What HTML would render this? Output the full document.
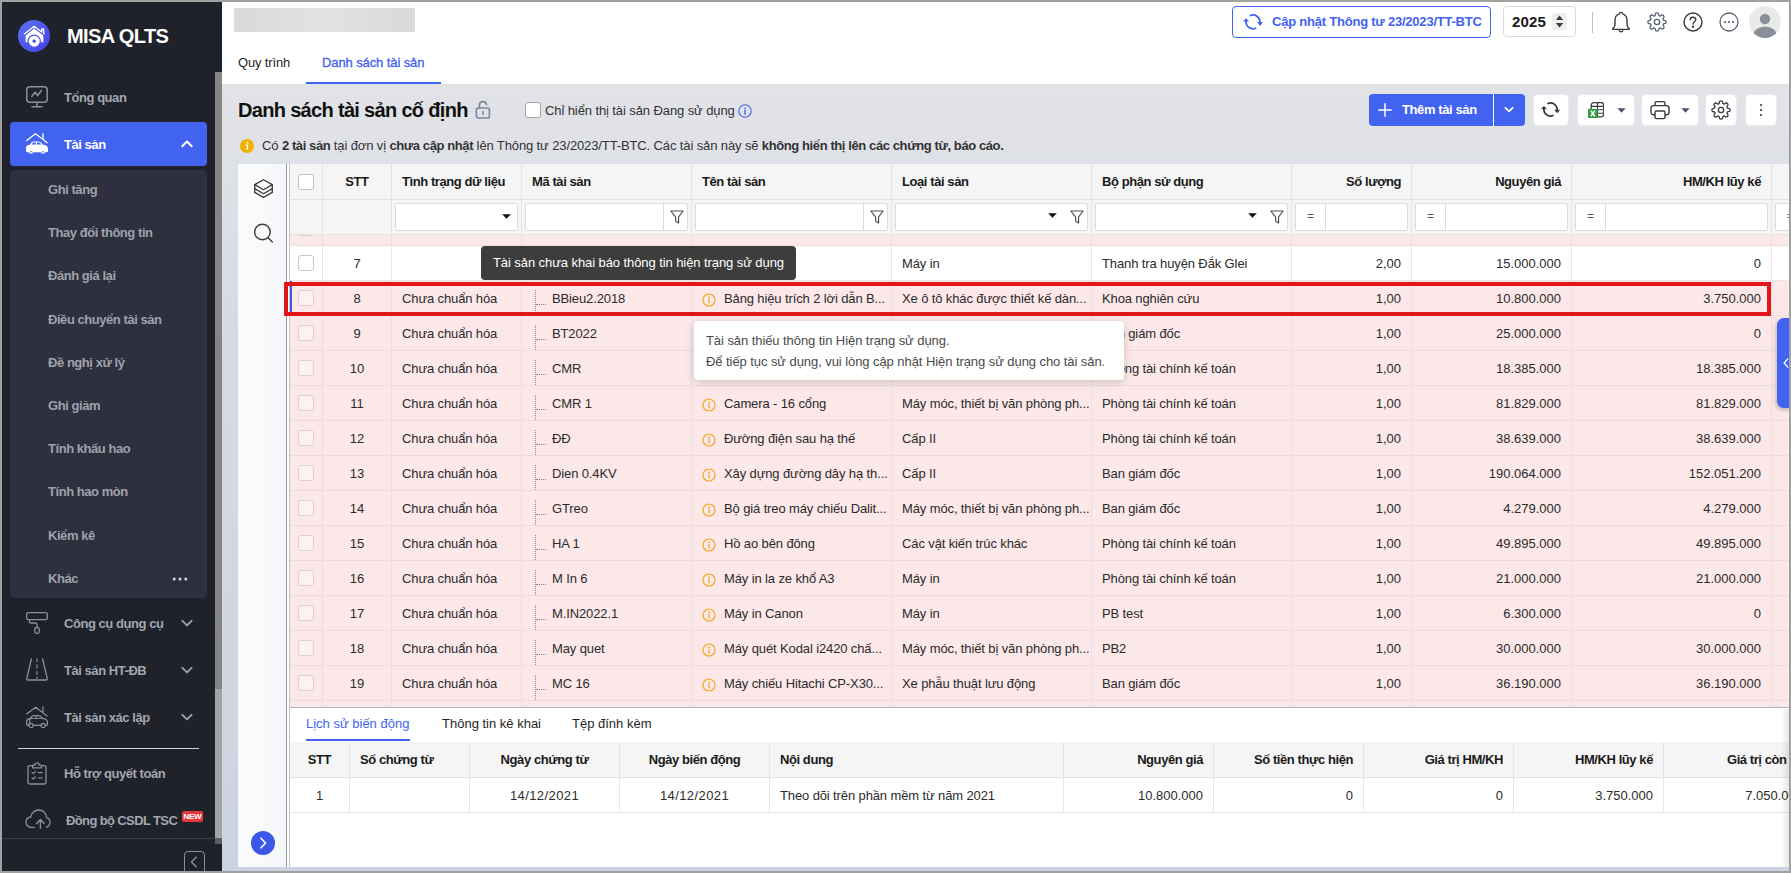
<!DOCTYPE html>
<html lang="vi"><head><meta charset="utf-8"><title>MISA QLTS</title>
<style>
*{box-sizing:border-box}
html,body{margin:0;padding:0}
body{width:1791px;height:873px;overflow:hidden;position:relative;background:#a1a1a1;font-family:"Liberation Sans",sans-serif;font-size:13px;color:#1f1f1f}
.abs{position:absolute}
#app{position:absolute;left:2px;top:2px;width:1787px;height:869px;overflow:hidden;background:linear-gradient(180deg,#e2e3e7 0%,#e2e3e7 9%,#dfe1e8 18.600%,#d6dae4 37%,#ccd3e0 100%)}
/* all children of #app positioned in page coords minus 2 => use wrapper shifted */
#pg{position:absolute;left:-2px;top:-2px;width:1791px;height:873px}
b,.b{font-weight:700}
/* sidebar */
#sb{position:absolute;left:2px;top:2px;width:220px;height:869px;background:#1f222b}
.mi{position:absolute;left:10px;width:197px;height:42px;border-radius:4px;color:#a3a6ae;font-weight:700;font-size:13px;letter-spacing:-.45px}
.mi .t{position:absolute;left:54px;top:0;line-height:42px;white-space:nowrap}
.mi svg.ic{position:absolute;left:14px;top:9px;width:24px;height:24px}
.mi svg.ch{position:absolute;left:169px;top:15px;width:14px;height:12px}
.mi.act{background:#4262f0;color:#fff}
#sub{position:absolute;left:10px;top:170px;width:197px;height:428px;background:#2e303f;border-radius:4px}
.si{position:absolute;left:38px;line-height:20px;color:#9fa2aa;font-weight:700;font-size:13px;letter-spacing:-.45px;white-space:nowrap}
/* top */
#top{position:absolute;left:222px;top:2px;width:1567px;height:82px;background:#fff}
.tab{position:absolute;top:53px;line-height:20px;font-size:13px;white-space:nowrap}
/* toolbar buttons */
.btn{position:absolute;top:95px;height:30px;background:#fff;border-radius:4px;box-shadow:0 0 0 1px rgba(255,255,255,.35)}
/* grid */
#panel{position:absolute;left:238px;top:164px;width:1551px;height:703px;background:#fff}
#grid{position:absolute;left:290px;top:164px;width:1499px;height:543px;overflow:hidden;background:#fff}
.hd{position:absolute;left:0;top:0;width:1499px;height:71px;background:#f5f5f5}
.hc{position:absolute;top:0;height:35px;line-height:35px;font-weight:700;font-size:13px;letter-spacing:-.42px;padding:0 10px;white-space:nowrap;border-right:1px solid #e4e4e4;color:#1a1a1a}
.fc{position:absolute;top:36px;height:35px;border-right:1px solid #e4e4e4}
.fi{position:absolute;left:3px;right:3px;top:3px;height:28px;background:#fff;border:1px solid #dcdcdc;border-radius:2px}
.row{position:absolute;left:0;width:1499px;background:#fff;border-bottom:1px solid #e6e6e6}
.row.pink{background:#fce8e8;border-bottom-color:#eadede}
.c{position:absolute;top:0;height:100%;line-height:36px;padding:0 0 0 10px;letter-spacing:-.12px;white-space:nowrap;overflow:hidden;border-right:1px solid #e6e6e6;color:#2b2b2b;font-size:13px}
.pink .c{border-right-color:#eadede}
.c.ctr{text-align:center;padding:0;letter-spacing:0}
.c.num{text-align:right;padding-right:10px;letter-spacing:0}
.cb{position:absolute;left:8px;top:9px;width:16px;height:16px;border:1px solid #c6c6c6;border-radius:3px;background:#fff}
.pink .cb{background:#fdf1f1;border-color:#dccfcf}
.tree{position:absolute;left:13px;top:9px;width:11px;height:25px;border-left:1px dotted #8a8a8a}
.tree:after{content:"";position:absolute;left:0;top:14px;width:10px;border-top:1px dotted #8a8a8a}
.ma{position:absolute;left:30px}
.wi{position:absolute;left:10px;top:12px;width:14px;height:14px}
.ten{position:absolute;left:32px}
.hd{z-index:2}
.fn{position:absolute;right:3px;top:6px;width:14px;height:14px}
.ar{position:absolute;top:10px;width:9px;height:5px}
.fdiv{position:absolute;right:23px;top:0;width:1px;height:100%;background:#dcdcdc}
.eq{position:absolute;left:0;top:0;width:30px;height:100%;border-right:1px solid #dcdcdc;text-align:center;line-height:25px;font-size:12px;color:#555}
.fi{right:3px}
.mi .t{left:52px;top:2px}
.mi svg.ch{left:167.5px;top:16.3px}
.k{letter-spacing:-.4px}
</style></head><body>
<div id="app"><div id="pg">

<!-- ============ SIDEBAR ============ -->
<div class="abs" style="left:2px;top:2px;width:220px;height:869px;background:#1f222b"></div>
<!-- logo -->
<svg class="abs" style="left:18px;top:20px;width:32px;height:32px" viewBox="0 0 32 32">
  <defs><linearGradient id="lg" x1="0" y1="0" x2="1" y2="1"><stop offset="0" stop-color="#5b72f2"/><stop offset="1" stop-color="#4540e6"/></linearGradient></defs>
  <circle cx="16" cy="16" r="16" fill="url(#lg)"/>
  <path d="M6 14.200 L16.200 6.300 L23.800 12 L23.800 9 L25.600 9 L25.600 13.200 L26.600 14" fill="none" stroke="#fff" stroke-width="1.3" stroke-linejoin="round"/>
  <path d="M16.200 8.600 L25.400 15.400 L25.400 22.200 L7.600 22.200 L7.600 15.400 Z" fill="#fff"/>
  <circle cx="16.200" cy="21.200" r="6.700" fill="#4c56ec"/>
  <circle cx="16.200" cy="21.200" r="5.500" fill="#fff"/>
  <path d="M16.200 19.100 L18.300 21.200 L16.200 23.300 L14.100 21.200 Z" fill="#4a52ea"/>
</svg>
<div class="abs" style="left:67px;top:22px;line-height:28px;font-size:20px;font-weight:700;color:#fff;letter-spacing:-.6px;white-space:nowrap">MISA QLTS</div>

<!-- Tổng quan -->
<div class="mi" style="left:12px;top:75px">
  <svg class="ic" style="left:14px;top:11px;width:22px;height:22px" viewBox="0 0 22 22" fill="none" stroke="#8e9096" stroke-width="1.500" stroke-linecap="round" stroke-linejoin="round"><rect x=".8" y=".8" width="20.400" height="15.400" rx="3"/><path d="M11 16.5V20.5M6 20.8H16"/><path d="M5.800 10.500L9 6.200L11.600 9.600L15.400 4.600" stroke-width="1.600"/></svg>
  <span class="t">Tổng quan</span>
</div>
<!-- Tài sản (active) -->
<div class="mi act" style="left:10px;top:122px;height:44px">
  <svg class="ic" style="left:16px;top:11px;width:22px;height:22px" viewBox="0 0 22 22"><path d="M.7 7.6L9.5 .8L17 6.6V.6M17 6.6L21 9.8" fill="none" stroke="#fff" stroke-width="1.3" stroke-linecap="round" stroke-linejoin="round"/><path d="M4.2 11.6C5 9.6 6 8.4 8 8.4H12.6C14.4 8.4 15.6 9.4 16.8 11.4C19.6 11.8 22 13 22 15.6V18C22 18.8 21.4 19.2 20.6 19.2H19.6A2.6 2.6 0 0 1 14.6 19.2H7.6A2.6 2.6 0 0 1 2.6 19.2H1.4C.6 19.2 0 18.8 0 18V15C0 13 1.8 12 4.2 11.6Z" fill="#fff"/><path d="M5.8 11.4C6.3 10.2 7 9.6 8.2 9.6H9.8V11.4ZM11 9.6H12.6C13.6 9.6 14.4 10.2 15.2 11.4H11Z" fill="#4262f0"/><circle cx="5.1" cy="19.4" r="1.5" fill="#4262f0"/><circle cx="17.1" cy="19.4" r="1.5" fill="#4262f0"/><circle cx="5.1" cy="19.4" r="1" fill="#fff"/><circle cx="17.1" cy="19.4" r="1" fill="#fff"/></svg>
  <span class="t" style="left:54px;top:1px;line-height:44px">Tài sản</span>
  <svg class="ch" style="left:169.500px;top:15.500px" viewBox="0 0 14 10" fill="none" stroke="#fff" stroke-width="2" stroke-linecap="round" stroke-linejoin="round"><path d="M2.300 7.200L7 2.500L11.700 7.200"/></svg>
</div>
<!-- submenu -->
<div id="sub"></div>
<span class="si" style="left:48px;top:180px">Ghi tăng</span>
<span class="si" style="left:48px;top:223px">Thay đổi thông tin</span>
<span class="si" style="left:48px;top:266px">Đánh giá lại</span>
<span class="si" style="left:48px;top:310px">Điều chuyển tài sản</span>
<span class="si" style="left:48px;top:353px">Đề nghị xử lý</span>
<span class="si" style="left:48px;top:396px">Ghi giảm</span>
<span class="si" style="left:48px;top:439px">Tính khấu hao</span>
<span class="si" style="left:48px;top:482px">Tính hao mòn</span>
<span class="si" style="left:48px;top:526px">Kiểm kê</span>
<span class="si" style="left:48px;top:569px">Khác</span>
<svg class="abs" style="left:172px;top:577px;width:16px;height:4px" viewBox="0 0 16 4" fill="#d8d9dd"><circle cx="2.2" cy="2" r="1.5"/><circle cx="8" cy="2" r="1.5"/><circle cx="13.8" cy="2" r="1.5"/></svg>

<!-- CCDC -->
<div class="mi" style="left:12px;top:601px">
  <svg class="ic" style="left:14px;top:11px;width:22px;height:22px" viewBox="0 0 22 22" fill="none" stroke="#8e9096" stroke-width="1.3" stroke-linecap="round" stroke-linejoin="round"><rect x=".7" y=".7" width="20.6" height="7" rx="1.6"/><path d="M3.4 7.8V9.6C3.4 10.6 4 11 5 11H9C10.4 11 11 11.6 11 13V15.4"/><rect x="8.8" y="15.4" width="4.4" height="6" rx="2.2"/></svg>
  <span class="t">Công cụ dụng cụ</span>
  <svg class="ch" viewBox="0 0 14 10" fill="none" stroke="#a0a2a9" stroke-width="1.9" stroke-linecap="round" stroke-linejoin="round"><path d="M2.400 2.800L7 7.400L11.600 2.800"/></svg>
</div>
<!-- HT-ĐB -->
<div class="mi" style="left:12px;top:648px">
  <svg class="ic" style="left:14px;top:10px;width:22px;height:23px" viewBox="0 0 22 23" fill="none" stroke="#8e9096" stroke-width="1.3" stroke-linecap="round" stroke-linejoin="round"><path d="M5.4 1L.8 20.4C.6 21.4 1 22 2 22H20C21 22 21.4 21.4 21.2 20.4L16.6 1"/><path d="M11 1V3.6M11 6.6V10M11 13.4V16.4M11 19V20.4" stroke-width="1.1"/></svg>
  <span class="t">Tài sản HT-ĐB</span>
  <svg class="ch" viewBox="0 0 14 10" fill="none" stroke="#a0a2a9" stroke-width="1.9" stroke-linecap="round" stroke-linejoin="round"><path d="M2.400 2.800L7 7.400L11.600 2.800"/></svg>
</div>
<!-- xác lập -->
<div class="mi" style="left:12px;top:695px">
  <svg class="ic" style="left:14px;top:11px;width:22px;height:22px" viewBox="0 0 22 22" fill="none" stroke="#8e9096" stroke-width="1.2" stroke-linecap="round" stroke-linejoin="round"><path d="M.7 8L9.6 1.2L17 6.8V.8M17 6.8L21.2 10.2"/><path d="M4.4 12.4C5.2 10.6 6.2 9.6 8 9.6H12.4C14.2 9.6 15.4 10.4 16.6 12.4C19.4 12.8 21.4 13.8 21.4 16V18.4C21.4 19 21 19.4 20.4 19.4H19.4M14.8 19.4H7.4M2.8 19.4H1.6C1 19.4.6 19 .6 18.4V15.6C.6 13.8 2.2 12.8 4.4 12.4Z"/><path d="M4.4 12.4H16.6M10.4 9.8V12.4" stroke-width="1"/><circle cx="5.1" cy="19.4" r="2.1"/><circle cx="17.1" cy="19.4" r="2.1"/></svg>
  <span class="t">Tài sản xác lập</span>
  <svg class="ch" viewBox="0 0 14 10" fill="none" stroke="#a0a2a9" stroke-width="1.9" stroke-linecap="round" stroke-linejoin="round"><path d="M2.400 2.800L7 7.400L11.600 2.800"/></svg>
</div>
<div class="abs" style="left:18px;top:748px;width:181px;height:1px;background:#cfd0d3"></div>
<!-- Hỗ trợ -->
<div class="mi" style="left:12px;top:751px">
  <svg class="ic" style="left:15px;top:11px;width:20px;height:23px" viewBox="0 0 20 23" fill="none" stroke="#8e9096" stroke-width="1.3" stroke-linecap="round" stroke-linejoin="round"><path d="M5.6 3.6H3C1.8 3.6 1 4.4 1 5.6V20C1 21.2 1.8 22 3 22H17C18.200 22 19 21.2 19 20V5.600C19 4.4 18.2 3.600 17 3.600H14.4"/><path d="M5.600 5.800V3.200H7.800C7.800 1.800 8.800 .8 10 .8C11.200 .8 12.200 1.800 12.200 3.200H14.400V5.800Z"/><path d="M5 10.400L6.300 11.700L8.400 9.400M11 10.600H15.400M5 15.800L6.300 17.100L8.400 14.800M11 16H15.400" stroke-width="1.2"/></svg>
  <span class="t">Hỗ trợ quyết toán</span>
</div>
<!-- Đồng bộ -->
<div class="mi" style="left:12px;top:798px">
  <svg class="ic" style="left:13px;top:11px;width:26px;height:20px" viewBox="0 0 26 20" fill="none" stroke="#8e9096" stroke-width="1.3" stroke-linecap="round" stroke-linejoin="round"><path d="M9.4 18.4H6.600C3.600 18.400 1 16.200 1 13.200C1 10.400 3 8.200 5.800 8C6.400 4 9.600 1 13.600 1C18.200 1 21.600 4.400 21.600 8.600C23.600 9.200 25 10.800 25 13C25 15.400 23.600 17.400 21.400 18.200"/><path d="M15.400 19.400V10.800M11.600 14.400L15.400 10.600L19.200 14.400" stroke-width="1.4"/></svg>
  <span class="t" style="left:54px;letter-spacing:-.62px">Đồng bộ CSDL TSC</span>
</div>
<div class="abs" style="left:182px;top:811px;width:21px;height:11px;background:#e5383d;border-radius:2px;color:#fff;font-size:8px;font-weight:700;line-height:11px;text-align:center;letter-spacing:-.3px">NEW</div>
<!-- footer -->
<div class="abs" style="left:2px;top:838px;width:213px;height:1px;background:#3d4049"></div>
<div class="abs" style="left:184px;top:851px;width:21px;height:24px;border:1px solid #8b8d92;border-radius:4px"></div>
<svg class="abs" style="left:190px;top:856px;width:8px;height:12px" viewBox="0 0 8 12" fill="none" stroke="#9a9ca3" stroke-width="1.1" stroke-linecap="round" stroke-linejoin="round"><path d="M6.4 1L1.4 6L6.4 11"/></svg>
<!-- scrollbar -->
<div class="abs" style="left:215px;top:72px;width:7px;height:617px;background:#858585"></div>
<div class="abs" style="left:215px;top:689px;width:7px;height:149px;background:#a4a4a4"></div>
<div class="abs" style="left:215px;top:838px;width:7px;height:6px;background:#5d5d5d"></div>


<!-- ============ TOP BAR ============ -->
<div id="top"></div>
<div class="abs" style="left:234px;top:8px;width:181px;height:24px;background:linear-gradient(90deg,#d9d9d9,#e2e2e2 50%,#d9d9d9);"></div>
<span class="tab" style="left:238px;color:#1f1f1f;letter-spacing:-.15px">Quy trình</span>
<span class="tab" style="left:322px;color:#4262f0;-webkit-text-stroke:.3px #4262f0;letter-spacing:-.1px">Danh sách tài sản</span>
<div class="abs" style="left:306px;top:82px;width:135px;height:2px;background:#4262f0"></div>
<!-- update button -->
<div class="abs" style="left:1232px;top:6px;width:259px;height:32px;border:1px solid #4262f0;border-radius:4px;background:#fff"></div>
<svg class="abs" style="left:1243px;top:14px;width:20px;height:16px" viewBox="0 0 20 16"><g fill="none" stroke="#4262f0" stroke-width="1.7" stroke-linecap="round"><path d="M7.4 1.5A7 7 0 0 1 17 8"/><path d="M12.600 14.3A7 7 0 0 1 3 7.600"/></g><path d="M14.100 8.100H20L17.050 11.900Z" fill="#4262f0"/><path d="M.1 7.500H6.100L3.050 4.200Z" fill="#4262f0"/></svg>
<span class="abs" style="left:1272px;top:12px;line-height:20px;font-size:13px;font-weight:700;color:#4262f0;letter-spacing:-.22px;white-space:nowrap">Cập nhật Thông tư 23/2023/TT-BTC</span>
<!-- year -->
<div class="abs" style="left:1503px;top:6px;width:73px;height:31px;border:1px solid #d9dbe0;border-radius:4px;background:#fff"></div>
<span class="abs" style="left:1512px;top:11px;line-height:22px;font-size:15px;font-weight:700;color:#1a1a1a;letter-spacing:.15px">2025</span>
<div class="abs" style="left:1552px;top:13px;width:15px;height:17px;background:#efefef;border-radius:1px"></div>
<svg class="abs" style="left:1555px;top:15px;width:9px;height:13px" viewBox="0 0 9 13" fill="#3a3a3a"><path d="M4.500 .6L8.200 5H.8Z"/><path d="M4.500 12.400L8.200 8H.8Z"/></svg>
<div class="abs" style="left:1592px;top:12px;width:1px;height:21px;background:#bcc1d2"></div>
<!-- bell -->
<svg class="abs" style="left:1611px;top:11px;width:20px;height:22px" viewBox="0 0 20 22" fill="none" stroke="#3a3a3a" stroke-width="1.4" stroke-linecap="round" stroke-linejoin="round"><path d="M10 1.400C8.800 1.400 8.400 2.200 8.400 2.800C5.600 3.600 4 6 4 9V13.400C4 15.400 3.200 16.400 1.800 17.600V18.400H18.200V17.600C16.800 16.400 16 15.400 16 13.400V9C16 6 14.400 3.600 11.600 2.800C11.600 2.200 11.200 1.400 10 1.400Z"/><path d="M8.200 19.600C8.400 20.400 9.100 20.800 10 20.800C10.900 20.800 11.600 20.400 11.800 19.600"/></svg>
<!-- gear -->
<svg class="abs" style="left:1647px;top:12px;width:20px;height:20px" viewBox="0 0 24 24" fill="none" stroke="#5b6275" stroke-width="1.600" stroke-linecap="round" stroke-linejoin="round"><circle cx="12" cy="12" r="3.200"/><path d="M19.400 15a1.650 1.650 0 0 0 .33 1.820l.06.06a2 2 0 1 1-2.830 2.830l-.06-.06a1.650 1.650 0 0 0-1.820-.33 1.650 1.650 0 0 0-1 1.510V21a2 2 0 0 1-4 0v-.09A1.650 1.650 0 0 0 9 19.400a1.650 1.650 0 0 0-1.820.33l-.06.06a2 2 0 1 1-2.830-2.830l.06-.06a1.650 1.650 0 0 0 .33-1.820 1.650 1.650 0 0 0-1.510-1H3a2 2 0 0 1 0-4h.09A1.650 1.650 0 0 0 4.600 9a1.650 1.650 0 0 0-.33-1.820l-.06-.06a2 2 0 1 1 2.830-2.830l.06.06a1.650 1.650 0 0 0 1.820.33H9a1.650 1.650 0 0 0 1-1.510V3a2 2 0 0 1 4 0v.09a1.650 1.650 0 0 0 1 1.510 1.650 1.650 0 0 0 1.820-.33l.06-.06a2 2 0 1 1 2.830 2.830l-.06.06a1.650 1.650 0 0 0-.33 1.820V9a1.650 1.650 0 0 0 1.510 1H21a2 2 0 0 1 0 4h-.09a1.650 1.650 0 0 0-1.510 1z"/></svg>
<!-- help -->
<svg class="abs" style="left:1683px;top:12px;width:20px;height:20px" viewBox="0 0 20 20" fill="none" stroke="#3a3a3a" stroke-width="1.400" stroke-linecap="round" stroke-linejoin="round"><circle cx="10" cy="10" r="9"/><path d="M7.200 7.800C7.200 6.200 8.400 5.200 10 5.200C11.600 5.200 12.800 6.200 12.800 7.600C12.800 9.600 10 9.800 10 12"/><circle cx="10" cy="14.800" r=".5" fill="#3a3a3a"/></svg>
<!-- more -->
<svg class="abs" style="left:1719px;top:12px;width:20px;height:20px" viewBox="0 0 20 20" fill="none" stroke="#5b6275" stroke-width="1.300"><circle cx="10" cy="10" r="9"/><g fill="#5b6275" stroke="none"><circle cx="6" cy="10" r="1.100"/><circle cx="10" cy="10" r="1.100"/><circle cx="14" cy="10" r="1.100"/></g></svg>
<!-- avatar -->
<svg class="abs" style="left:1749px;top:6px;width:32px;height:32px" viewBox="0 0 32 32"><defs><clipPath id="av"><circle cx="16" cy="16" r="16"/></clipPath></defs><circle cx="16" cy="16" r="16" fill="#e9e9e9"/><g clip-path="url(#av)" fill="#8b8e9b"><circle cx="16" cy="13" r="5.200"/><ellipse cx="16" cy="29" rx="11.500" ry="8.600"/></g></svg>


<!-- ============ TITLE / TOOLBAR ============ -->
<span class="abs" style="left:238px;top:96px;line-height:28px;font-size:20px;font-weight:700;color:#111;letter-spacing:-.68px;white-space:nowrap">Danh sách tài sản cố định</span>
<svg class="abs" style="left:475px;top:100px;width:16px;height:19px" viewBox="0 0 16 19" fill="none" stroke="#8388a0" stroke-width="1.700" stroke-linecap="round" stroke-linejoin="round"><rect x="1.400" y="8" width="13" height="10" rx="1.800"/><path d="M4.400 8V5.200C4.400 3 5.800 1.600 8 1.600C9.800 1.600 11.200 2.600 11.500 4.300"/><path d="M8 11.800V14.200"/></svg>
<div class="abs" style="left:525px;top:102px;width:16px;height:16px;border:1px solid #a6a6a6;border-radius:3px;background:#fff"></div>
<span class="abs" style="left:545px;top:101px;line-height:20px;font-size:13px;color:#333;letter-spacing:-.1px;white-space:nowrap">Chỉ hiển thị tài sản Đang sử dụng</span>
<svg class="abs" style="left:738px;top:104px;width:14px;height:14px" viewBox="0 0 14 14" fill="none" stroke="#4262f0" stroke-width="1.100"><circle cx="7" cy="7" r="6.200"/><circle cx="7" cy="4.200" r=".8" fill="#4262f0" stroke="none"/><path d="M7 6.200V10.400" stroke-width="1.300" stroke-linecap="round"/></svg>
<!-- add button -->
<div class="abs" style="left:1369px;top:94px;width:156px;height:32px;background:#4262f0;border-radius:4px"></div>
<div class="abs" style="left:1493px;top:94px;width:1px;height:32px;background:#fff"></div>
<svg class="abs" style="left:1378px;top:103px;width:14px;height:14px" viewBox="0 0 14 14" stroke="#fff" stroke-width="1.500" stroke-linecap="round"><path d="M7 .8V13.200M.8 7H13.200"/></svg>
<span class="abs" style="left:1402px;top:100px;line-height:20px;font-size:13px;font-weight:700;color:#fff;letter-spacing:-.4px;white-space:nowrap">Thêm tài sản</span>
<svg class="abs" style="left:1504px;top:106px;width:10px;height:8px" viewBox="0 0 10 8" fill="none" stroke="#fff" stroke-width="1.800" stroke-linecap="round" stroke-linejoin="round"><path d="M1.400 1.800L5 5.400L8.600 1.800"/></svg>
<!-- refresh -->
<div class="btn" style="left:1534px;width:34px"></div>
<svg class="abs" style="left:1541.400px;top:102.400px;width:19px;height:15.200px" viewBox="0 0 20 16"><g fill="none" stroke="#333" stroke-width="1.800" stroke-linecap="round"><path d="M7.400 1.500A7 7 0 0 1 17 8"/><path d="M12.600 14.300A7 7 0 0 1 3 7.600"/></g><path d="M14.100 8.100H20L17.050 11.900Z" fill="#333"/><path d="M.1 7.500H6.100L3.050 4.200Z" fill="#333"/></svg>
<!-- excel -->
<div class="btn" style="left:1578px;width:56px"></div>
<svg class="abs" style="left:1587.800px;top:102.300px;width:16.400px;height:16.200px" viewBox="0 0 16.400 16.200"><rect x="3.200" y=".65" width="12.500" height="14.200" rx="2.600" fill="#fff" stroke="#3a3a3a" stroke-width="1.300"/><path d="M3.200 4.400H15.700M3.200 7.800H15.700M3.200 11.200H15.700M9.500 .65V14.850" stroke="#3a3a3a" stroke-width="1.100"/><rect x="0" y="6.900" width="9.700" height="9.200" fill="#2ea043"/><path d="M2.800 8.800L6.900 14.200M6.900 8.800L2.800 14.200" stroke="#fff" stroke-width="1.500"/></svg>
<svg class="abs" style="left:1617px;top:108px;width:9px;height:5px" viewBox="0 0 9 5" fill="#4b5273"><path d="M.4 .2H8.600L4.500 4.800Z"/></svg>
<!-- print -->
<div class="btn" style="left:1642px;width:56px"></div>
<svg class="abs" style="left:1650px;top:100px;width:20px;height:20px" viewBox="0 0 20 20" fill="none" stroke="#3a3a3a" stroke-width="1.400" stroke-linejoin="round"><path d="M5 5.600V3.200C5 2.200 5.600 1.600 6.600 1.600H13.400C14.400 1.600 15 2.200 15 3.200V5.600"/><path d="M5 14.800H3.600C2 14.800 1 13.800 1 12.200V8.200C1 6.600 2 5.600 3.600 5.600H16.400C18 5.600 19 6.600 19 8.200V12.200C19 13.800 18 14.800 16.400 14.800H15"/><rect x="5" y="11" width="10" height="7.600" rx="1.400"/></svg>
<svg class="abs" style="left:1681px;top:108px;width:9px;height:5px" viewBox="0 0 9 5" fill="#4b5273"><path d="M.4 .2H8.600L4.500 4.800Z"/></svg>
<!-- settings -->
<div class="btn" style="left:1706px;width:30px"></div>
<svg class="abs" style="left:1711px;top:100px;width:20px;height:20px" viewBox="0 0 24 24" fill="none" stroke="#3a3a3a" stroke-width="1.600" stroke-linecap="round" stroke-linejoin="round"><circle cx="12" cy="12" r="3.200"/><path d="M19.400 15a1.650 1.650 0 0 0 .33 1.820l.06.06a2 2 0 1 1-2.830 2.830l-.06-.06a1.650 1.650 0 0 0-1.820-.33 1.650 1.650 0 0 0-1 1.510V21a2 2 0 0 1-4 0v-.09A1.650 1.650 0 0 0 9 19.400a1.650 1.650 0 0 0-1.820.33l-.06.06a2 2 0 1 1-2.830-2.830l.06-.06a1.650 1.650 0 0 0 .33-1.820 1.650 1.650 0 0 0-1.510-1H3a2 2 0 0 1 0-4h.09A1.650 1.650 0 0 0 4.600 9a1.650 1.650 0 0 0-.33-1.820l-.06-.06a2 2 0 1 1 2.830-2.830l.06.06a1.650 1.650 0 0 0 1.820.33H9a1.650 1.650 0 0 0 1-1.510V3a2 2 0 0 1 4 0v.09a1.650 1.650 0 0 0 1 1.510 1.650 1.650 0 0 0 1.820-.33l.06-.06a2 2 0 1 1 2.830 2.830l-.06.06a1.650 1.650 0 0 0-.33 1.820V9a1.650 1.650 0 0 0 1.510 1H21a2 2 0 0 1 0 4h-.09a1.650 1.650 0 0 0-1.510 1z"/></svg>
<!-- more vertical -->
<div class="btn" style="left:1746px;width:30px"></div>
<svg class="abs" style="left:1759px;top:103px;width:4px;height:14px" viewBox="0 0 4 14" fill="#3a3a3a"><circle cx="2" cy="2" r="1.100"/><circle cx="2" cy="7" r="1.100"/><circle cx="2" cy="12" r="1.100"/></svg>
<!-- notice -->
<svg class="abs" style="left:240px;top:139px;width:14px;height:14px" viewBox="0 0 14 14"><circle cx="7" cy="7" r="7" fill="#f2b100"/><circle cx="7.400" cy="3.800" r="1" fill="#fff"/><path d="M5.600 6.200H7.800L7 10.200H8.200" fill="none" stroke="#fff" stroke-width="1.300" stroke-linejoin="round"/></svg>
<span class="abs" style="left:262px;top:136px;line-height:20px;font-size:13px;color:#333;letter-spacing:-.12px;white-space:nowrap">Có <b class="k">2 tài sản</b> tại đơn vị <b class="k">chưa cập nhật</b> lên Thông tư 23/2023/TT-BTC. Các tài sản này sẽ <b class="k">không hiển thị lên các chứng từ, báo cáo.</b></span>


<!-- ============ GRID ============ -->
<div id="panel"></div>
<div class="abs" style="left:238px;top:164px;width:48px;height:703px;background:linear-gradient(90deg,#fafbfc,#f5f7fa)"></div>
<div class="abs" style="left:286px;top:164px;width:1px;height:703px;background:#9a9a9a"></div>
<div class="abs" style="left:289px;top:164px;width:1px;height:703px;background:#c4c4c4"></div>
<svg class="abs" style="left:253.600px;top:179.400px;width:19px;height:19.200px" viewBox="0 0 19 19.200" fill="none" stroke="#3a3a3a" stroke-width="1.300" stroke-linejoin="round" stroke-linecap="round"><path d="M9.500 .8L18.300 5.600L9.500 10.700L.7 5.600Z"/><path d="M.7 9.600L9.500 14.700L18.300 9.600"/><path d="M.7 13.400L9.500 18.400L18.300 13.400"/><path d="M.7 5.600V13.400M18.300 5.600V13.400"/></svg>
<svg class="abs" style="left:253px;top:223px;width:21px;height:21px" viewBox="0 0 21 21" fill="none" stroke="#3a3a3a" stroke-width="1.400" stroke-linecap="round"><circle cx="9.400" cy="9" r="7.800"/><path d="M15.100 14.700L19.300 18.900"/></svg>
<svg class="abs" style="left:251px;top:831px;width:24px;height:24px" viewBox="0 0 24 24"><circle cx="12" cy="12" r="12" fill="#3b58e8"/><path d="M10 7.200L14.600 12L10 16.800" fill="none" stroke="#fff" stroke-width="1.600" stroke-linecap="round" stroke-linejoin="round"/></svg>

<div id="grid">
  <div class="hd">
  <div class="hc" style="left:0px;width:33px;text-align:left"><i class="cb" style="top:10px;background:#fff;border-color:#c2c2c2"></i></div>
<div class="fc" style="left:0px;width:33px"></div>
<div class="hc" style="left:33px;width:69px;text-align:center">STT</div>
<div class="fc" style="left:33px;width:69px"></div>
<div class="hc" style="left:102px;width:130px;text-align:left">Tình trạng dữ liệu</div>
<div class="fc" style="left:102px;width:130px"><div class="fi"><svg class="ar" style="right:6px;top:10px" viewBox="0 0 9 5" fill="#111"><path d="M.2 .2H8.800L4.500 4.800Z"/></svg></div></div>
<div class="hc" style="left:232px;width:170px;text-align:left">Mã tài sản</div>
<div class="fc" style="left:232px;width:170px"><div class="fi"><div class="fdiv"></div><svg class="fn" viewBox="0 0 14 14" fill="none" stroke="#4a4a4a" stroke-width="1.1" stroke-linejoin="round"><path d="M.8 1H13.200L8.600 6.800V13L5.600 11V6.800Z"/></svg></div></div>
<div class="hc" style="left:402px;width:200px;text-align:left">Tên tài sản</div>
<div class="fc" style="left:402px;width:200px"><div class="fi"><div class="fdiv"></div><svg class="fn" viewBox="0 0 14 14" fill="none" stroke="#4a4a4a" stroke-width="1.1" stroke-linejoin="round"><path d="M.8 1H13.200L8.600 6.800V13L5.600 11V6.800Z"/></svg></div></div>
<div class="hc" style="left:602px;width:200px;text-align:left">Loại tài sản</div>
<div class="fc" style="left:602px;width:200px"><div class="fi"><svg class="ar" style="right:30px;top:9px" viewBox="0 0 9 5" fill="#111"><path d="M.2 .2H8.800L4.500 4.800Z"/></svg><svg class="fn" viewBox="0 0 14 14" fill="none" stroke="#4a4a4a" stroke-width="1.1" stroke-linejoin="round"><path d="M.8 1H13.200L8.600 6.800V13L5.600 11V6.800Z"/></svg></div></div>
<div class="hc" style="left:802px;width:200px;text-align:left">Bộ phận sử dụng</div>
<div class="fc" style="left:802px;width:200px"><div class="fi"><svg class="ar" style="right:30px;top:9px" viewBox="0 0 9 5" fill="#111"><path d="M.2 .2H8.800L4.500 4.800Z"/></svg><svg class="fn" viewBox="0 0 14 14" fill="none" stroke="#4a4a4a" stroke-width="1.1" stroke-linejoin="round"><path d="M.8 1H13.200L8.600 6.800V13L5.600 11V6.800Z"/></svg></div></div>
<div class="hc" style="left:1002px;width:120px;text-align:right">Số lượng</div>
<div class="fc" style="left:1002px;width:120px"><div class="fi"><div class="eq">=</div></div></div>
<div class="hc" style="left:1122px;width:160px;text-align:right">Nguyên giá</div>
<div class="fc" style="left:1122px;width:160px"><div class="fi"><div class="eq">=</div></div></div>
<div class="hc" style="left:1282px;width:200px;text-align:right">HM/KH lũy kế</div>
<div class="fc" style="left:1282px;width:200px"><div class="fi"><div class="eq">=</div></div></div>
<div class="hc" style="left:1482px;width:200px;text-align:left"></div>
<div class="fc" style="left:1482px;width:200px"><div class="fi"><div class="eq">=</div></div></div>
<div class="abs" style="left:0;top:35px;width:1499px;height:1px;background:#e2e2e2"></div><div class="abs" style="left:0;top:70px;width:1499px;height:1px;background:#e2e2e2"></div>
  </div>
  <div class="row pink" style="top:47px;height:35px"><div class="c " style="left:0px;width:33px"><i class="cb"></i></div><div class="c ctr" style="left:33px;width:69px"></div><div class="c " style="left:102px;width:130px"></div><div class="c " style="left:232px;width:170px"></div><div class="c " style="left:402px;width:200px"></div><div class="c " style="left:602px;width:200px"></div><div class="c " style="left:802px;width:200px"></div><div class="c num" style="left:1002px;width:120px"></div><div class="c num" style="left:1122px;width:160px"></div><div class="c num" style="left:1282px;width:200px"></div><div class="c " style="left:1482px;width:200px"></div></div>
<div class="row" style="top:82px;height:35px"><div class="c " style="left:0px;width:33px"><i class="cb"></i></div><div class="c ctr" style="left:33px;width:69px">7</div><div class="c " style="left:102px;width:130px"></div><div class="c " style="left:232px;width:170px"></div><div class="c " style="left:402px;width:200px"></div><div class="c " style="left:602px;width:200px">Máy in</div><div class="c " style="left:802px;width:200px">Thanh tra huyện Đắk Glei</div><div class="c num" style="left:1002px;width:120px">2,00</div><div class="c num" style="left:1122px;width:160px">15.000.000</div><div class="c num" style="left:1282px;width:200px">0</div><div class="c " style="left:1482px;width:200px"></div></div>
<div class="row pink" style="top:117px;height:35px"><div class="c " style="left:0px;width:33px"><i class="cb"></i></div><div class="c ctr" style="left:33px;width:69px">8</div><div class="c " style="left:102px;width:130px">Chưa chuẩn hóa</div><div class="c " style="left:232px;width:170px"><i class="tree"></i><span class="ma">BBieu2.2018</span></div><div class="c " style="left:402px;width:200px"><svg class="wi" viewBox="0 0 14 14"><circle cx="7" cy="7" r="6" fill="none" stroke="#f5a623" stroke-width="1.2"/><circle cx="7" cy="4.4" r="0.9" fill="#f5a623"/><rect x="6.35" y="6" width="1.3" height="4.4" rx=".6" fill="#f5a623"/></svg><span class="ten">Bảng hiệu trích 2 lời dẫn B...</span></div><div class="c " style="left:602px;width:200px">Xe ô tô khác được thiết kế dàn...</div><div class="c " style="left:802px;width:200px">Khoa nghiên cứu</div><div class="c num" style="left:1002px;width:120px">1,00</div><div class="c num" style="left:1122px;width:160px">10.800.000</div><div class="c num" style="left:1282px;width:200px">3.750.000</div><div class="c " style="left:1482px;width:200px"></div></div>
<div class="row pink" style="top:152px;height:35px"><div class="c " style="left:0px;width:33px"><i class="cb"></i></div><div class="c ctr" style="left:33px;width:69px">9</div><div class="c " style="left:102px;width:130px">Chưa chuẩn hóa</div><div class="c " style="left:232px;width:170px"><i class="tree"></i><span class="ma">BT2022</span></div><div class="c " style="left:402px;width:200px"></div><div class="c " style="left:602px;width:200px"></div><div class="c " style="left:802px;width:200px">Ban giám đốc</div><div class="c num" style="left:1002px;width:120px">1,00</div><div class="c num" style="left:1122px;width:160px">25.000.000</div><div class="c num" style="left:1282px;width:200px">0</div><div class="c " style="left:1482px;width:200px"></div></div>
<div class="row pink" style="top:187px;height:35px"><div class="c " style="left:0px;width:33px"><i class="cb"></i></div><div class="c ctr" style="left:33px;width:69px">10</div><div class="c " style="left:102px;width:130px">Chưa chuẩn hóa</div><div class="c " style="left:232px;width:170px"><i class="tree"></i><span class="ma">CMR</span></div><div class="c " style="left:402px;width:200px"></div><div class="c " style="left:602px;width:200px"></div><div class="c " style="left:802px;width:200px">Phòng tài chính kế toán</div><div class="c num" style="left:1002px;width:120px">1,00</div><div class="c num" style="left:1122px;width:160px">18.385.000</div><div class="c num" style="left:1282px;width:200px">18.385.000</div><div class="c " style="left:1482px;width:200px"></div></div>
<div class="row pink" style="top:222px;height:35px"><div class="c " style="left:0px;width:33px"><i class="cb"></i></div><div class="c ctr" style="left:33px;width:69px">11</div><div class="c " style="left:102px;width:130px">Chưa chuẩn hóa</div><div class="c " style="left:232px;width:170px"><i class="tree"></i><span class="ma">CMR 1</span></div><div class="c " style="left:402px;width:200px"><svg class="wi" viewBox="0 0 14 14"><circle cx="7" cy="7" r="6" fill="none" stroke="#f5a623" stroke-width="1.2"/><circle cx="7" cy="4.4" r="0.9" fill="#f5a623"/><rect x="6.35" y="6" width="1.3" height="4.4" rx=".6" fill="#f5a623"/></svg><span class="ten">Camera - 16 cổng</span></div><div class="c " style="left:602px;width:200px">Máy móc, thiết bị văn phòng ph...</div><div class="c " style="left:802px;width:200px">Phòng tài chính kế toán</div><div class="c num" style="left:1002px;width:120px">1,00</div><div class="c num" style="left:1122px;width:160px">81.829.000</div><div class="c num" style="left:1282px;width:200px">81.829.000</div><div class="c " style="left:1482px;width:200px"></div></div>
<div class="row pink" style="top:257px;height:35px"><div class="c " style="left:0px;width:33px"><i class="cb"></i></div><div class="c ctr" style="left:33px;width:69px">12</div><div class="c " style="left:102px;width:130px">Chưa chuẩn hóa</div><div class="c " style="left:232px;width:170px"><i class="tree"></i><span class="ma">ĐĐ</span></div><div class="c " style="left:402px;width:200px"><svg class="wi" viewBox="0 0 14 14"><circle cx="7" cy="7" r="6" fill="none" stroke="#f5a623" stroke-width="1.2"/><circle cx="7" cy="4.4" r="0.9" fill="#f5a623"/><rect x="6.35" y="6" width="1.3" height="4.4" rx=".6" fill="#f5a623"/></svg><span class="ten">Đường điện sau hạ thế</span></div><div class="c " style="left:602px;width:200px">Cấp II</div><div class="c " style="left:802px;width:200px">Phòng tài chính kế toán</div><div class="c num" style="left:1002px;width:120px">1,00</div><div class="c num" style="left:1122px;width:160px">38.639.000</div><div class="c num" style="left:1282px;width:200px">38.639.000</div><div class="c " style="left:1482px;width:200px"></div></div>
<div class="row pink" style="top:292px;height:35px"><div class="c " style="left:0px;width:33px"><i class="cb"></i></div><div class="c ctr" style="left:33px;width:69px">13</div><div class="c " style="left:102px;width:130px">Chưa chuẩn hóa</div><div class="c " style="left:232px;width:170px"><i class="tree"></i><span class="ma">Dien 0.4KV</span></div><div class="c " style="left:402px;width:200px"><svg class="wi" viewBox="0 0 14 14"><circle cx="7" cy="7" r="6" fill="none" stroke="#f5a623" stroke-width="1.2"/><circle cx="7" cy="4.4" r="0.9" fill="#f5a623"/><rect x="6.35" y="6" width="1.3" height="4.4" rx=".6" fill="#f5a623"/></svg><span class="ten">Xây dựng đường dây hạ th...</span></div><div class="c " style="left:602px;width:200px">Cấp II</div><div class="c " style="left:802px;width:200px">Ban giám đốc</div><div class="c num" style="left:1002px;width:120px">1,00</div><div class="c num" style="left:1122px;width:160px">190.064.000</div><div class="c num" style="left:1282px;width:200px">152.051.200</div><div class="c " style="left:1482px;width:200px"></div></div>
<div class="row pink" style="top:327px;height:35px"><div class="c " style="left:0px;width:33px"><i class="cb"></i></div><div class="c ctr" style="left:33px;width:69px">14</div><div class="c " style="left:102px;width:130px">Chưa chuẩn hóa</div><div class="c " style="left:232px;width:170px"><i class="tree"></i><span class="ma">GTreo</span></div><div class="c " style="left:402px;width:200px"><svg class="wi" viewBox="0 0 14 14"><circle cx="7" cy="7" r="6" fill="none" stroke="#f5a623" stroke-width="1.2"/><circle cx="7" cy="4.4" r="0.9" fill="#f5a623"/><rect x="6.35" y="6" width="1.3" height="4.4" rx=".6" fill="#f5a623"/></svg><span class="ten">Bộ giá treo máy chiếu Dalit...</span></div><div class="c " style="left:602px;width:200px">Máy móc, thiết bị văn phòng ph...</div><div class="c " style="left:802px;width:200px">Ban giám đốc</div><div class="c num" style="left:1002px;width:120px">1,00</div><div class="c num" style="left:1122px;width:160px">4.279.000</div><div class="c num" style="left:1282px;width:200px">4.279.000</div><div class="c " style="left:1482px;width:200px"></div></div>
<div class="row pink" style="top:362px;height:35px"><div class="c " style="left:0px;width:33px"><i class="cb"></i></div><div class="c ctr" style="left:33px;width:69px">15</div><div class="c " style="left:102px;width:130px">Chưa chuẩn hóa</div><div class="c " style="left:232px;width:170px"><i class="tree"></i><span class="ma">HA 1</span></div><div class="c " style="left:402px;width:200px"><svg class="wi" viewBox="0 0 14 14"><circle cx="7" cy="7" r="6" fill="none" stroke="#f5a623" stroke-width="1.2"/><circle cx="7" cy="4.4" r="0.9" fill="#f5a623"/><rect x="6.35" y="6" width="1.3" height="4.4" rx=".6" fill="#f5a623"/></svg><span class="ten">Hồ ao bên đông</span></div><div class="c " style="left:602px;width:200px">Các vật kiến trúc khác</div><div class="c " style="left:802px;width:200px">Phòng tài chính kế toán</div><div class="c num" style="left:1002px;width:120px">1,00</div><div class="c num" style="left:1122px;width:160px">49.895.000</div><div class="c num" style="left:1282px;width:200px">49.895.000</div><div class="c " style="left:1482px;width:200px"></div></div>
<div class="row pink" style="top:397px;height:35px"><div class="c " style="left:0px;width:33px"><i class="cb"></i></div><div class="c ctr" style="left:33px;width:69px">16</div><div class="c " style="left:102px;width:130px">Chưa chuẩn hóa</div><div class="c " style="left:232px;width:170px"><i class="tree"></i><span class="ma">M In 6</span></div><div class="c " style="left:402px;width:200px"><svg class="wi" viewBox="0 0 14 14"><circle cx="7" cy="7" r="6" fill="none" stroke="#f5a623" stroke-width="1.2"/><circle cx="7" cy="4.4" r="0.9" fill="#f5a623"/><rect x="6.35" y="6" width="1.3" height="4.4" rx=".6" fill="#f5a623"/></svg><span class="ten">Máy in la ze khổ A3</span></div><div class="c " style="left:602px;width:200px">Máy in</div><div class="c " style="left:802px;width:200px">Phòng tài chính kế toán</div><div class="c num" style="left:1002px;width:120px">1,00</div><div class="c num" style="left:1122px;width:160px">21.000.000</div><div class="c num" style="left:1282px;width:200px">21.000.000</div><div class="c " style="left:1482px;width:200px"></div></div>
<div class="row pink" style="top:432px;height:35px"><div class="c " style="left:0px;width:33px"><i class="cb"></i></div><div class="c ctr" style="left:33px;width:69px">17</div><div class="c " style="left:102px;width:130px">Chưa chuẩn hóa</div><div class="c " style="left:232px;width:170px"><i class="tree"></i><span class="ma">M.IN2022.1</span></div><div class="c " style="left:402px;width:200px"><svg class="wi" viewBox="0 0 14 14"><circle cx="7" cy="7" r="6" fill="none" stroke="#f5a623" stroke-width="1.2"/><circle cx="7" cy="4.4" r="0.9" fill="#f5a623"/><rect x="6.35" y="6" width="1.3" height="4.4" rx=".6" fill="#f5a623"/></svg><span class="ten">Máy in Canon</span></div><div class="c " style="left:602px;width:200px">Máy in</div><div class="c " style="left:802px;width:200px">PB test</div><div class="c num" style="left:1002px;width:120px">1,00</div><div class="c num" style="left:1122px;width:160px">6.300.000</div><div class="c num" style="left:1282px;width:200px">0</div><div class="c " style="left:1482px;width:200px"></div></div>
<div class="row pink" style="top:467px;height:35px"><div class="c " style="left:0px;width:33px"><i class="cb"></i></div><div class="c ctr" style="left:33px;width:69px">18</div><div class="c " style="left:102px;width:130px">Chưa chuẩn hóa</div><div class="c " style="left:232px;width:170px"><i class="tree"></i><span class="ma">May quet</span></div><div class="c " style="left:402px;width:200px"><svg class="wi" viewBox="0 0 14 14"><circle cx="7" cy="7" r="6" fill="none" stroke="#f5a623" stroke-width="1.2"/><circle cx="7" cy="4.4" r="0.9" fill="#f5a623"/><rect x="6.35" y="6" width="1.3" height="4.4" rx=".6" fill="#f5a623"/></svg><span class="ten">Máy quét Kodal i2420 chấ...</span></div><div class="c " style="left:602px;width:200px">Máy móc, thiết bị văn phòng ph...</div><div class="c " style="left:802px;width:200px">PB2</div><div class="c num" style="left:1002px;width:120px">1,00</div><div class="c num" style="left:1122px;width:160px">30.000.000</div><div class="c num" style="left:1282px;width:200px">30.000.000</div><div class="c " style="left:1482px;width:200px"></div></div>
<div class="row pink" style="top:502px;height:35px"><div class="c " style="left:0px;width:33px"><i class="cb"></i></div><div class="c ctr" style="left:33px;width:69px">19</div><div class="c " style="left:102px;width:130px">Chưa chuẩn hóa</div><div class="c " style="left:232px;width:170px"><i class="tree"></i><span class="ma">MC 16</span></div><div class="c " style="left:402px;width:200px"><svg class="wi" viewBox="0 0 14 14"><circle cx="7" cy="7" r="6" fill="none" stroke="#f5a623" stroke-width="1.2"/><circle cx="7" cy="4.4" r="0.9" fill="#f5a623"/><rect x="6.35" y="6" width="1.3" height="4.4" rx=".6" fill="#f5a623"/></svg><span class="ten">Máy chiếu Hitachi CP-X30...</span></div><div class="c " style="left:602px;width:200px">Xe phẫu thuật lưu động</div><div class="c " style="left:802px;width:200px">Ban giám đốc</div><div class="c num" style="left:1002px;width:120px">1,00</div><div class="c num" style="left:1122px;width:160px">36.190.000</div><div class="c num" style="left:1282px;width:200px">36.190.000</div><div class="c " style="left:1482px;width:200px"></div></div>
<div class="row pink" style="top:537px;height:35px"><div class="c " style="left:0px;width:33px"><i class="cb"></i></div><div class="c ctr" style="left:33px;width:69px"></div><div class="c " style="left:102px;width:130px"></div><div class="c " style="left:232px;width:170px"></div><div class="c " style="left:402px;width:200px"></div><div class="c " style="left:602px;width:200px"></div><div class="c " style="left:802px;width:200px"></div><div class="c num" style="left:1002px;width:120px"></div><div class="c num" style="left:1122px;width:160px"></div><div class="c num" style="left:1282px;width:200px"></div><div class="c " style="left:1482px;width:200px"></div></div>
</div>
<div class="abs" style="left:290px;top:707px;width:1499px;height:1px;background:#b4b4b4"></div>
<div class="abs" style="left:290px;top:708px;width:1499px;height:159px;background:#fff;overflow:hidden">
<span class="tab" style="left:16px;top:6px;color:#4262f0">Lịch sử biến động</span><span class="tab" style="left:152px;top:6px;color:#1f1f1f">Thông tin kê khai</span><span class="tab" style="left:282px;top:6px;color:#1f1f1f">Tệp đính kèm</span>
<div class="abs" style="left:16px;top:31px;width:104px;height:2px;background:#4262f0"></div>
<div class="abs" style="left:0;top:34px;width:1499px;height:36px;background:#f5f5f5;border-bottom:1px solid #e2e2e2"></div>
<div class="hc" style="left:0px;top:34px;width:60px;height:36px;line-height:35px;text-align:center">STT</div>
<div class="c" style="left:0px;top:70px;width:60px;height:35px;line-height:35px;text-align:center;padding:0 10px;border-bottom:1px solid #e6e6e6">1</div>
<div class="hc" style="left:60px;top:34px;width:120px;height:36px;line-height:35px;text-align:left">Số chứng từ</div>
<div class="c" style="left:60px;top:70px;width:120px;height:35px;line-height:35px;text-align:left;border-bottom:1px solid #e6e6e6"></div>
<div class="hc" style="left:180px;top:34px;width:150px;height:36px;line-height:35px;text-align:center">Ngày chứng từ</div>
<div class="c" style="left:180px;top:70px;width:150px;height:35px;line-height:35px;text-align:center;padding:0 10px;letter-spacing:.4px;border-bottom:1px solid #e6e6e6">14/12/2021</div>
<div class="hc" style="left:330px;top:34px;width:150px;height:36px;line-height:35px;text-align:center">Ngày biến động</div>
<div class="c" style="left:330px;top:70px;width:150px;height:35px;line-height:35px;text-align:center;padding:0 10px;letter-spacing:.4px;border-bottom:1px solid #e6e6e6">14/12/2021</div>
<div class="hc" style="left:480px;top:34px;width:294px;height:36px;line-height:35px;text-align:left">Nội dung</div>
<div class="c" style="left:480px;top:70px;width:294px;height:35px;line-height:35px;text-align:left;border-bottom:1px solid #e6e6e6">Theo dõi trên phần mềm từ năm 2021</div>
<div class="hc" style="left:774px;top:34px;width:150px;height:36px;line-height:35px;text-align:right">Nguyên giá</div>
<div class="c num" style="left:774px;top:70px;width:150px;height:35px;line-height:35px;text-align:right;border-bottom:1px solid #e6e6e6">10.800.000</div>
<div class="hc" style="left:924px;top:34px;width:150px;height:36px;line-height:35px;text-align:right">Số tiền thực hiện</div>
<div class="c num" style="left:924px;top:70px;width:150px;height:35px;line-height:35px;text-align:right;border-bottom:1px solid #e6e6e6">0</div>
<div class="hc" style="left:1074px;top:34px;width:150px;height:36px;line-height:35px;text-align:right">Giá trị HM/KH</div>
<div class="c num" style="left:1074px;top:70px;width:150px;height:35px;line-height:35px;text-align:right;border-bottom:1px solid #e6e6e6">0</div>
<div class="hc" style="left:1224px;top:34px;width:150px;height:36px;line-height:35px;text-align:right">HM/KH lũy kế</div>
<div class="c num" style="left:1224px;top:70px;width:150px;height:35px;line-height:35px;text-align:right;border-bottom:1px solid #e6e6e6">3.750.000</div>
<div class="hc" style="left:1374px;top:34px;width:150px;height:36px;line-height:35px;text-align:right">Giá trị còn lại</div>
<div class="c num" style="left:1374px;top:70px;width:150px;height:35px;line-height:35px;text-align:right;border-bottom:1px solid #e6e6e6">7.050.000</div>
</div>
<div class="abs" style="left:290px;top:281px;width:2px;height:35px;background:#3f5be6"></div>
<div class="abs" style="left:284px;top:282px;width:1487px;height:34px;border:4px solid #e0161b"></div>
<div class="abs" style="left:481px;top:246px;width:315px;height:34px;background:#3e3d3d;border-radius:4px;color:#fff;font-size:13px;line-height:34px;padding-left:12px;letter-spacing:-.08px;white-space:nowrap">Tài sản chưa khai báo thông tin hiện trạng sử dụng</div>
<div class="abs" style="left:694px;top:321px;width:430px;height:59px;background:#fff;border-radius:4px;box-shadow:0 2px 10px rgba(0,0,0,.18);color:#4a4a4a;font-size:13px;line-height:21px;padding:9px 0 0 12px;letter-spacing:-.07px;white-space:nowrap">Tài sản thiếu thông tin Hiện trạng sử dụng.<br>Để tiếp tục sử dụng, vui lòng cập nhật Hiện trạng sử dụng cho tài sản.</div>
<div class="abs" style="left:1777px;top:318px;width:14px;height:90px;background:#4262f0;border-radius:7px 0 0 7px;box-shadow:-1px 2px 4px rgba(0,0,0,.25)"></div>
<svg class="abs" style="left:1782.500px;top:358px;width:6px;height:10px" viewBox="0 0 6 11" fill="none" stroke="#fff" stroke-width="1.500" stroke-linecap="round" stroke-linejoin="round"><path d="M5 1L1 5.500L5 10"/></svg>
<div class="abs" style="left:1781px;top:709px;width:8px;height:158px;background:linear-gradient(90deg,rgba(0,0,0,0),rgba(0,0,0,.10))"></div>

</div></div>
</body></html>
